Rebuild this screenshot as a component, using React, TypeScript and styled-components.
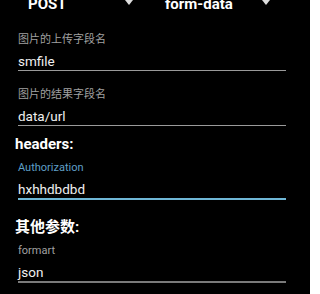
import React from 'react'
import styled, { createGlobalStyle } from 'styled-components'

const GlobalStyle = createGlobalStyle`
  html, body {
    margin: 0;
    padding: 0;
    background: #ffffff;
  }
  body {
    font-family: Roboto, "Noto Sans CJK SC", sans-serif;
    overflow: hidden;
  }
`

const Screen = styled.div`
  width: 310px;
  height: 294px;
  background: #000;
  overflow: hidden;
  padding: 0 24px 0 18px;
  box-sizing: border-box;
`

const SelectRow = styled.div`
  display: flex;
  gap: 17px;
  margin-top: -8px;
  height: 24px;
`

const Select = styled.div`
  width: 120px;
  display: flex;
  align-items: center;
  justify-content: space-between;
  padding: 0 5px 0 10px;
  box-sizing: border-box;
  color: #fff;
  font-size: 15px;
  font-weight: 700;
`

const Caret = styled.span`
  width: 0;
  height: 0;
  border-left: 4px solid transparent;
  border-right: 4px solid transparent;
  border-top: 5px solid #ddd;
  margin-top: -3px;
`

const Field = styled.div`
  margin-top: 17px;
`

const Label = styled.div<{ $active?: boolean }>`
  font-size: 11px;
  line-height: 14px;
  color: ${(p) => (p.$active ? '#5f9fc6' : '#a0a0a0')};
`

const Input = styled.div<{ $active?: boolean; $thick?: boolean }>`
  font-size: 13.5px;
  line-height: 16px;
  color: #f0f0f0;
  padding-top: 6px;
  padding-bottom: 1px;
  border-bottom: ${(p) =>
    p.$active ? '2px solid #6fb7d6' : p.$thick ? '2px solid #7a7a7a' : '1px solid #9a9a9a'};
`

const Heading = styled.div<{ $gap: number }>`
  color: #fff;
  font-size: 15px;
  font-weight: 700;
  line-height: 18px;
  margin: ${(p) => p.$gap}px 0 0 -3px;
  & + ${Field} {
    margin-top: 8px;
  }
`

export default function App() {
  return (
    <>
      <GlobalStyle />
      <Screen>
        <SelectRow>
          <Select>
            POST
            <Caret />
          </Select>
          <Select>
            form-data
            <Caret />
          </Select>
        </SelectRow>

        <Field>
          <Label>图片的上传字段名</Label>
          <Input>smfile</Input>
        </Field>

        <Field>
          <Label>图片的结果字段名</Label>
          <Input>data/url</Input>
        </Field>

        <Heading $gap={9}>headers:</Heading>
        <Field>
          <Label $active>Authorization</Label>
          <Input $active>hxhhdbdbd</Input>
        </Field>

        <Heading $gap={18}>其他参数:</Heading>
        <Field>
          <Label>formart</Label>
          <Input $thick>json</Input>
        </Field>
      </Screen>
    </>
  )
}
